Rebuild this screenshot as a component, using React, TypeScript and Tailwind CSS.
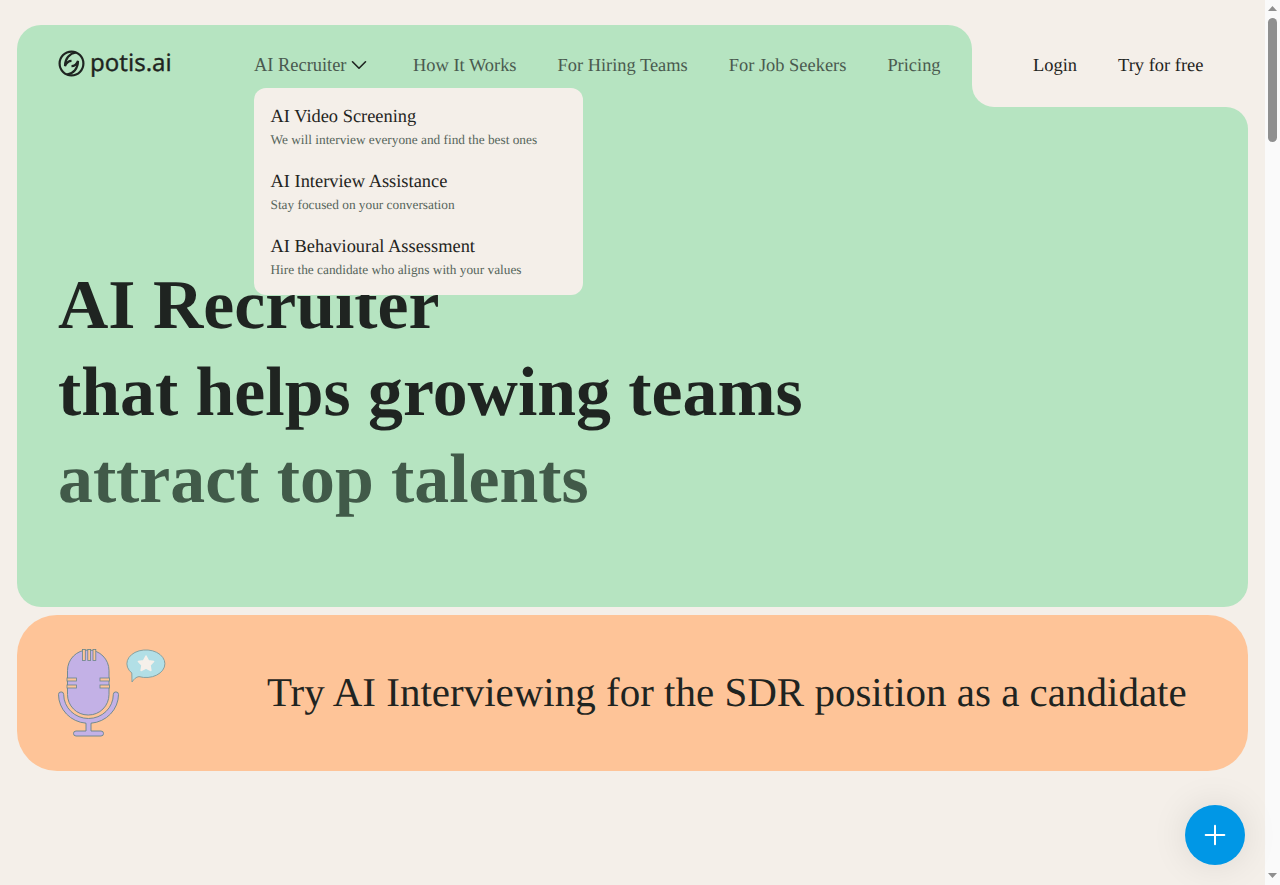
import { ChevronDown, Plus } from "lucide-react";

const navLinks = ["How It Works", "For Hiring Teams", "For Job Seekers", "Pricing"];

const products = [
  { title: "AI Video Screening", text: "We will interview everyone and find the best ones" },
  { title: "AI Interview Assistance", text: "Stay focused on your conversation" },
  { title: "AI Behavioural Assessment", text: "Hire the candidate who aligns with your values" },
];

function Logo() {
  return (
    <div className="flex items-center gap-[5px]">
      <svg width="27" height="27" viewBox="0 0 27 27" fill="none" stroke="#1f2421" strokeWidth="2.200">
        <circle cx="13.500" cy="13.500" r="11.900" />
        <path d="M18 2.500C11.500 3.500 7 8.500 7 16C8.500 12.500 10.500 10.800 13.500 10.800" />
        <path d="M9 24.500C15.500 23.500 20 18.500 20 11C18.500 14.500 16.500 16.200 13.500 16.200" />
      </svg>
      <span className="-mt-[1px] font-['Noto_Sans',sans-serif] text-[24px] leading-[28px] text-[#1f2421] [-webkit-text-stroke:0.3px_#1f2421]">potis.ai</span>
    </div>
  );
}

function MicIllustration() {
  return (
    <svg width="110" height="92" viewBox="0 0 110 92" className="shrink-0">
      <g fill="#c3b1e6" stroke="#66848a" strokeWidth="0.9">
        <rect x="9.500" y="3" width="41.500" height="65" rx="20.500" />
        <path d="M0.500 47.500A2.600 2.600 0 0 1 5.700 47.500A24.800 24 0 0 0 55.300 47.500A2.600 2.600 0 0 1 60.500 47.500A30 29 0 0 1 33 76.200V84H43A2.500 2.500 0 0 1 43 89H18A2.500 2.500 0 0 1 18 84H28V76.200A30 29 0 0 1 0.500 47.500Z" />
      </g>
      <g fill="#fec498" stroke="#66848a" strokeWidth="0.8">
        <rect x="24.500" y="2.500" width="2.800" height="11" />
        <rect x="29.800" y="2.500" width="2.800" height="11" />
        <rect x="35" y="2.500" width="2.800" height="11" />
        <rect x="9" y="31" width="9.500" height="3" />
        <rect x="9" y="38" width="9.500" height="3" />
        <rect x="42" y="31" width="9.500" height="3" />
        <rect x="42" y="38" width="9.500" height="3" />
      </g>
      <path d="M74 35L73.800 26A19 13.800 0 1 1 81 29.600C78 30 76 32 74 35Z" fill="#b2dfe6" stroke="#7f9b9c" strokeWidth="0.9" />
      <polygon points="88,9 90.400,13.700 95.600,14.500 92,18.200 92.900,23.500 88,21 83.100,23.500 84,18.200 80.400,14.500 85.600,13.700" fill="#f5f0ea" stroke="#f5f0ea" strokeWidth="1.500" strokeLinejoin="round" />
    </svg>
  );
}

function Scrollbar() {
  return (
    <aside className="flex h-full w-[15px] shrink-0 flex-col items-center bg-[#fafafa]">
      <svg width="9" height="5" viewBox="0 0 9 5" className="mt-[6px] fill-[#8f8f8f]">
        <path d="M4.500 0L9 5H0Z" />
      </svg>
      <div className="mt-[7px] h-[124px] w-[9px] rounded-[5px] bg-[#8f8f8f]" />
      <svg width="9" height="5" viewBox="0 0 9 5" className="mt-auto mb-[7px] fill-[#8f8f8f]">
        <path d="M4.500 5L9 0H0Z" />
      </svg>
    </aside>
  );
}

export default function App() {
  return (
    <div className="flex h-screen overflow-hidden bg-[#f4efe9] font-['Liberation_Serif',serif] [text-rendering:geometricPrecision]">
      <main className="min-w-0 flex-1 px-[17px] pt-[25px]">
        <div className="flex h-[82px]">
          <div className="flex w-[955px] items-start rounded-t-[24px] bg-[#b6e4c1] pl-[41px]">
            <div className="mt-[25px] w-[196px]">
              <Logo />
            </div>
            <nav className="relative mt-[28px] flex items-center gap-[41px] text-[18.420px] leading-[24px] whitespace-nowrap text-[#4a5a4f]">
              <button className="flex h-[24px] w-[118px] items-center">
                AI Recruiter
                <ChevronDown size={26} strokeWidth={1.5} className="-ml-[1px] shrink-0 text-[#1f2421]" />
              </button>
              {navLinks.map((link) => (
                <a key={link}>{link}</a>
              ))}
              <div className="absolute left-0 top-[35px] z-10 h-[207px] w-[329px] rounded-[12px] bg-[#f4efe9] pl-[16.500px] pt-[15px]">
                {products.map((item) => (
                  <div key={item.title} className="mb-[17px]">
                    <div className="text-[18.420px] leading-[26px] text-[#1f2421]">{item.title}</div>
                    <div className="text-[13.320px] leading-[22px] text-[#56655b]">{item.text}</div>
                  </div>
                ))}
              </div>
            </nav>
          </div>
          <div className="w-[276px] bg-[#b6e4c1]">
            <div className="flex h-full items-start gap-[41px] rounded-bl-[22px] bg-[#f4efe9] pl-[61px] pt-[28px] text-[18.450px] leading-[24px] text-[#1f2421]">
              <a>Login</a>
              <a>Try for free</a>
            </div>
          </div>
        </div>

        <section className="h-[500px] rounded-tr-[22px] rounded-b-[24px] bg-[#b6e4c1] pl-[41px] pt-[155px] text-[69.760px] leading-[87px] font-bold text-[#1f2421]">
          <h1>AI Recruiter</h1>
          <div>that helps growing teams</div>
          <div className="text-[#415a49]">attract top talents</div>
        </section>

        <section className="mt-[8px] flex h-[156px] items-center rounded-[40px] bg-[#fec498] pl-[41px]">
          <MicIllustration />
          <div className="mb-[2px] ml-[99px] text-[41px] leading-[50px] text-[#1f2421]">
            Try AI Interviewing for the SDR position as a candidate
          </div>
        </section>
      </main>

      <Scrollbar />

      <button className="fixed left-[1185px] top-[805px] flex h-[60px] w-[60px] items-center justify-center rounded-full bg-[#0097e6] text-white shadow-[0_0_36px_rgba(0,0,0,0.1)]">
        <Plus size={32} strokeWidth={1.5} />
      </button>
    </div>
  );
}
